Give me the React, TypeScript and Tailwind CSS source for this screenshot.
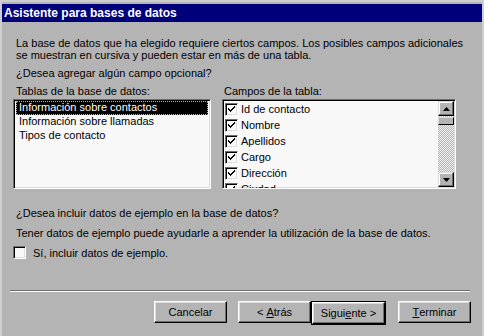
const font = { fontFamily: '"Liberation Sans", Arial, sans-serif' };

const bevelBtn =
  "relative h-[22px] w-[73px] bg-[#b4b4b4] text-[11px] text-black flex items-center justify-center border border-t-white border-l-white border-r-black border-b-black shadow-[inset_-1px_-1px_0_#6e6e6e,inset_1px_1px_0_#dcdcdc]";

const CheckBox = ({ checked }: { checked: boolean }) => (
  <span className="inline-block w-[13px] h-[13px] shrink-0 border border-t-[#6e6e6e] border-l-[#6e6e6e] border-r-white border-b-white bg-[#f8f8f8] shadow-[inset_1px_1px_0_#000,inset_-1px_-1px_0_#dcdcdc]">
    {checked && (
      <svg width="11" height="11" viewBox="0 0 11 11" className="block">
        <path d="M2 4h1v1h1v1h1V5h1V4h1V3h1V2h1v2H8v1H7v1H6v1H5v1H4V7H3V6H2z" fill="#000" />
      </svg>
    )}
  </span>
);

const Arrow = ({ up }: { up: boolean }) => (
  <div className="w-[16px] h-[15px] bg-[#b4b4b4] flex items-center justify-center border border-t-[#dcdcdc] border-l-[#dcdcdc] border-r-black border-b-black shadow-[inset_-1px_-1px_0_#6e6e6e,inset_1px_1px_0_#fff]">
    <svg width="7" height="4" viewBox="0 0 7 4">
      <path d={up ? "M3.5 0L7 4H0z" : "M0 0h7L3.5 4z"} fill="#000" />
    </svg>
  </div>
);

const tablas = [
  "Información sobre contactos",
  "Información sobre llamadas",
  "Tipos de contacto",
];

const campos = ["Id de contacto", "Nombre", "Apellidos", "Cargo", "Dirección", "Ciudad"];

const sunken =
  "border border-t-[#6e6e6e] border-l-[#6e6e6e] border-r-white border-b-white";

export default function App() {
  return (
    <div
      className="w-[484px] h-[336px] overflow-hidden bg-[#b4b4b4] text-black text-[11px] border-t-[2px] border-t-[#cfcfcf] border-l-[2px] border-l-[#cfcfcf] border-r-[2px] border-r-[#cfcfcf]"
      style={font}
    >
      <div className="pt-[2px]">
        <div className="h-[18px] bg-[#00007b] text-white font-bold text-[12px] leading-[18px] pl-[2px]">
          Asistente para bases de datos
        </div>
      </div>

      <div className="pl-[11px] pr-[10px] leading-[12px]">
        <p className="mt-[15px] pl-[3px]">
          La base de datos que ha elegido requiere ciertos campos. Los posibles campos adicionales
          <br />
          se muestran en cursiva y pueden estar en más de una tabla.
        </p>
        <p className="mt-[6px] pl-[3px]">¿Desea agregar algún campo opcional?</p>

        <div className="mt-[6px] flex gap-[11px]">
          <div className="w-[198px]">
            <div className="pl-[3px] h-[12px]">Tablas de la base de datos:</div>
            <div className={`mt-[2px] h-[90px] bg-[#f8f8f8] ${sunken} shadow-[inset_1px_1px_0_#000,inset_-1px_-1px_0_#dcdcdc] pt-[1px] px-[1px]`}>
              {tablas.map((t, i) => (
                <div
                  key={t}
                  className={`h-[14px] leading-[13px] pl-[3px] ml-[1px] mr-[1px] ${
                    i === 0 ? "bg-black text-white outline-1 outline-dotted outline-[#b4b4b4] -outline-offset-1" : ""
                  }`}
                >
                  {t}
                </div>
              ))}
            </div>
          </div>

          <div className="w-[234px]">
            <div className="pl-[2px] h-[12px]">Campos de la tabla:</div>
            <div className={`mt-[2px] h-[90px] bg-[#f8f8f8] ${sunken} shadow-[inset_1px_1px_0_#000,inset_-1px_-1px_0_#dcdcdc] flex overflow-hidden`}>
              <div className="flex-1 pl-[2px] pt-[1px]">
                {campos.map((c) => (
                  <div key={c} className="h-[16px] flex items-center gap-[3px]">
                    <CheckBox checked />
                    <span className="leading-[13px]">{c}</span>
                  </div>
                ))}
              </div>
              <div className="w-[16px] mt-[1px] mb-[1px] mr-[1px] flex flex-col bg-[length:2px_2px] bg-[conic-gradient(#f0f0f0_25%,#b4b4b4_0_50%,#f0f0f0_0_75%,#b4b4b4_0)]">
                <Arrow up />
                <div className="mt-[1px] h-[8px] w-[16px] bg-[#b4b4b4] border border-t-[#dcdcdc] border-l-[#dcdcdc] border-r-black border-b-black" />
                <div className="flex-1" />
                <Arrow up={false} />
              </div>
            </div>
          </div>
        </div>

        <p className="mt-[18px] pl-[3px]">¿Desea incluir datos de ejemplo en la base de datos?</p>
        <p className="mt-[8px] pl-[3px]">
          Tener datos de ejemplo puede ayudarle a aprender la utilización de la base de datos.
        </p>
        <div className="mt-[7px] flex items-center gap-[7px]">
          <CheckBox checked={false} />
          <span>Sí, incluir datos de ejemplo.</span>
        </div>
      </div>

      <div className="mt-[31px] ml-[8px] mr-[12px] h-[2px] border-t border-t-[#6e6e6e] border-b border-b-white" />

      <div className="mt-[9px] flex justify-end pr-[11px]">
        <button className={bevelBtn}>Cancelar</button>
        <button className={`${bevelBtn} ml-[11px]`}>
          &lt; <span className="underline ml-[3px]">A</span>trás
        </button>
        <div className="border border-black">
          <button className={`${bevelBtn} h-[20px] w-[71px]`}>
            Sigui<span className="underline">e</span>nte &gt;
          </button>
        </div>
        <button className={`${bevelBtn} ml-[12px]`}>
          <span className="underline">T</span>erminar
        </button>
      </div>
    </div>
  );
}
